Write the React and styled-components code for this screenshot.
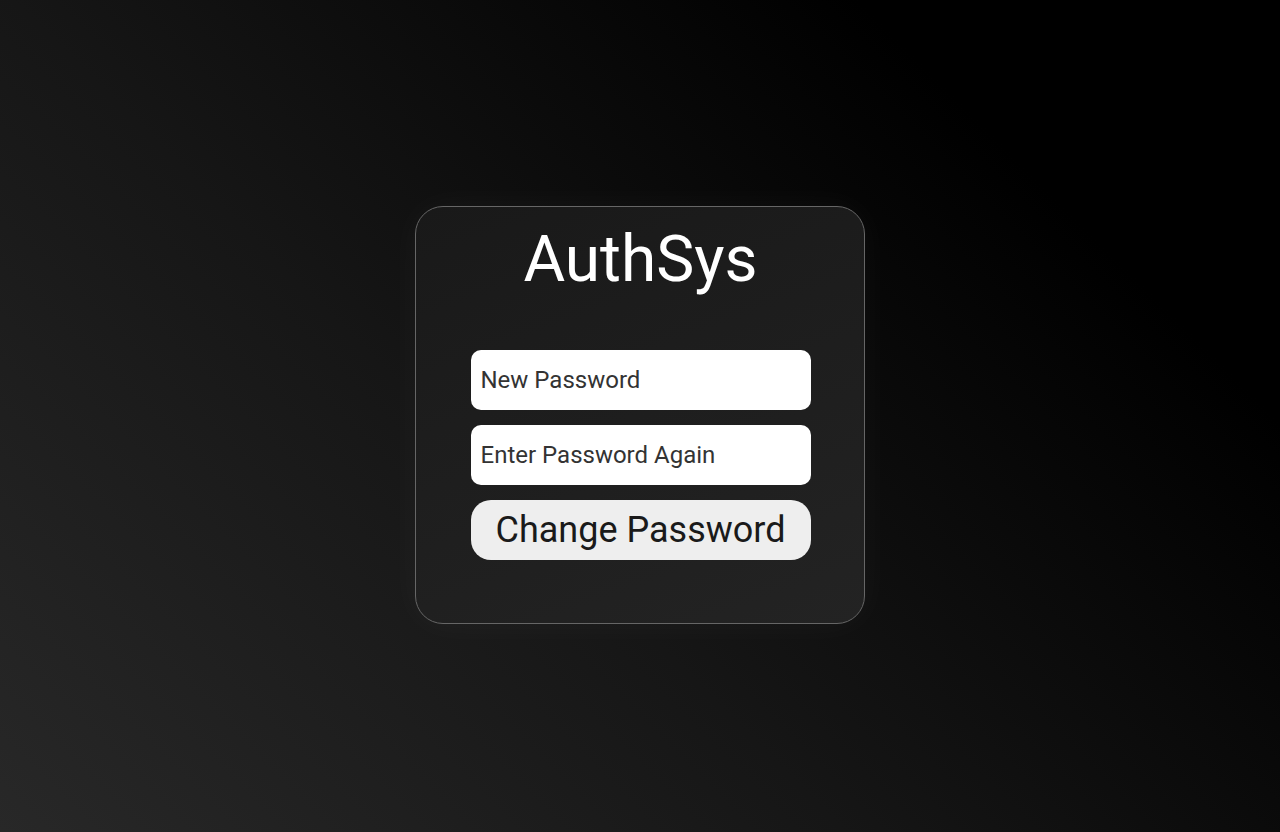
import React from "react";
import styled, { createGlobalStyle } from "styled-components";

const GlobalStyle = createGlobalStyle`
  html, body {
    margin: 0;
    padding: 0;
    height: 100%;
  }
  body {
    font-family: Roboto, "Liberation Sans", sans-serif;
    background: #000;
  }
  #root {
    height: 100%;
  }
`;

const Page = styled.div`
  height: 832px;
  display: flex;
  justify-content: center;
  align-items: flex-start;
  padding-top: 206px;
  box-sizing: border-box;
  background: linear-gradient(45deg, #282828 0%, #161616 40%, #000 80%);
`;

const Card = styled.form`
  width: 450px;
  height: 418px;
  box-sizing: border-box;
  display: flex;
  flex-direction: column;
  align-items: center;
  padding: 15px 0 0 1px;
  border: 1px solid #666;
  border-radius: 28px;
  background: linear-gradient(160deg, #191919 0%, #1e1e1e 50%, #232323 100%);
  box-shadow: 0 0 36px rgba(255, 255, 255, 0.04);
`;

const Title = styled.h1`
  margin: 0 0 53px;
  font-size: 64px;
  font-weight: 400;
  color: #fff;
  line-height: 75px;
`;

const Fields = styled.div`
  display: flex;
  flex-direction: column;
  gap: 15px;
  width: 340px;
`;

const Input = styled.input`
  height: 60px;
  box-sizing: border-box;
  border: none;
  border-radius: 10px;
  background: #fff;
  padding: 0 10px;
  font-family: Roboto, "Liberation Sans", sans-serif;
  font-size: 24px;
  color: #333;
  outline: none;

  &::placeholder {
    color: #333;
  }
`;

const Button = styled.button`
  height: 60px;
  border: none;
  border-radius: 20px;
  background: #eee;
  font-family: Roboto, "Liberation Sans", sans-serif;
  font-size: 36px;
  color: #1a1a1a;
  cursor: pointer;
  padding: 0;
`;

export default function App() {
  return (
    <>
      <GlobalStyle />
      <Page>
        <Card onSubmit={e => e.preventDefault()}>
          <Title>AuthSys</Title>
          <Fields>
            <Input type="password" placeholder="New Password" />
            <Input type="password" placeholder="Enter Password Again" />
            <Button type="submit">Change Password</Button>
          </Fields>
        </Card>
      </Page>
    </>
  );
}
